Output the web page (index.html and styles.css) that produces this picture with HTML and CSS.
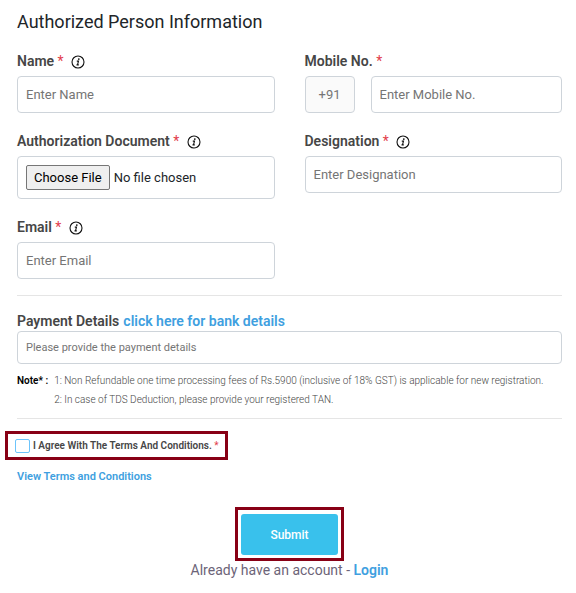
FILE: index.html
```
<!DOCTYPE html>
<html lang="en">
<head>
    <meta charset="UTF-8">
    <meta name="viewport" content="width=device-width, initial-scale=1.0">
    <title>Registration</title>
    <link rel="stylesheet" href="styles.css">
</head>
<body>
    <svg class="sprite" aria-hidden="true">
        <symbol id="info" viewBox="0 0 14 14">
            <circle cx="7" cy="7" r="6" fill="none" stroke="#111" stroke-width="1.1"/>
            <circle cx="7.8" cy="4.1" r="0.9" fill="#111"/>
            <path d="M5.8 6.1H7.5L6.5 9.9M5.5 9.9H7.8" fill="none" stroke="#111" stroke-width="1.1"/>
        </symbol>
    </svg>

    <form class="container">
        <h1>Authorized Person Information</h1>

        <div class="form-grid">
            <div class="form-group">
                <label for="name">Name <span class="required">*</span> <svg class="info-icon"><use href="#info"/></svg></label>
                <input type="text" class="form-control" id="name" placeholder="Enter Name">
            </div>
            <div class="form-group">
                <label for="mobile">Mobile No. <span class="required">*</span></label>
                <div class="mobile-row">
                    <span class="country-code">+91</span>
                    <input type="tel" class="form-control" id="mobile" placeholder="Enter Mobile No.">
                </div>
            </div>
            <div class="form-group">
                <label for="document">Authorization Document <span class="required">*</span> <svg class="info-icon"><use href="#info"/></svg></label>
                <input type="file" class="form-control file-control" id="document">
            </div>
            <div class="form-group">
                <label for="designation">Designation <span class="required">*</span> <svg class="info-icon"><use href="#info"/></svg></label>
                <input type="text" class="form-control" id="designation" placeholder="Enter Designation">
            </div>
            <div class="form-group">
                <label for="email">Email <span class="required">*</span> <svg class="info-icon"><use href="#info"/></svg></label>
                <input type="email" class="form-control" id="email" placeholder="Enter Email">
            </div>
        </div>

        <hr>

        <div class="payment">
            <div class="payment-label">
                <label for="payment">Payment Details</label>
                <a href="#">click here for bank details</a>
            </div>
            <input type="text" class="form-control payment-control" id="payment" placeholder="Please provide the payment details">
            <div class="note">
                <strong>Note* :</strong>
                <div>
                    <p>1: Non Refundable one time processing fees of Rs.5900 (inclusive of 18% GST) is applicable for new registration.</p>
                    <p>2: In case of TDS Deduction, please provide your registered TAN.</p>
                </div>
            </div>
        </div>

        <hr>

        <div class="terms highlight">
            <input type="checkbox" id="agree">
            <label for="agree">I Agree With The Terms And Conditions. <span class="required">*</span></label>
        </div>
        <a class="terms-link" href="#">View Terms and Conditions</a>

        <div class="actions">
            <div class="highlight">
                <button type="submit">Submit</button>
            </div>
            <p>Already have an account - <a href="#">Login</a></p>
        </div>
    </form>
</body>
</html>
```
FILE: styles.css
```
* {
    margin: 0;
    padding: 0;
    box-sizing: border-box;
}

body {
    font-family: Roboto, 'Liberation Sans', sans-serif;
    font-size: 14px;
    line-height: 20px;
    color: #464646;
    background: #fff;
}

.sprite {
    display: none;
}

.container {
    padding: 10px 14px 12px 17px;
}

h1 {
    margin-bottom: 17px;
    color: #212529;
    font-size: 18px;
    font-weight: 400;
    line-height: 24px;
}

label {
    display: block;
    font-weight: 600;
}

a {
    color: #409fe0;
    font-weight: 600;
    text-decoration: none;
}

.required {
    color: #e23d4b;
    font-weight: 400;
}

.info-icon {
    width: 14px;
    height: 14px;
    margin-left: 4px;
    vertical-align: -3px;
}

.form-grid {
    display: grid;
    grid-template-columns: 1fr 1fr;
    gap: 18px 30px;
}

.form-group label {
    height: 20px;
    margin-bottom: 5px;
}

.form-control {
    display: block;
    width: 100%;
    height: 37px;
    padding: 0 8px;
    border: 1px solid #ced4da;
    border-radius: 4px;
    background: #fff;
    color: #212529;
    font-family: inherit;
    font-size: 13px;
}

.form-control::placeholder {
    color: #757575;
}

.mobile-row {
    display: flex;
    gap: 16px;
}

.country-code {
    flex: 0 0 50px;
    border: 1px solid #ced4da;
    border-radius: 4px;
    background: #fafafa;
    color: #757575;
    font-size: 13px;
    line-height: 35px;
    text-align: center;
}

.file-control {
    height: 43px;
    padding: 8px;
}

.file-control::file-selector-button {
    height: 25px;
    margin-right: 4px;
    padding: 0 7px;
    border: 1px solid #767676;
    border-radius: 2px;
    background: #efefef;
    color: #000;
    font-family: inherit;
    font-size: 13px;
}

hr {
    margin: 16px 0 15px;
    border: none;
    border-top: 1px solid #e5e5e5;
}

.payment-label {
    display: flex;
    gap: 4px;
}

.payment-control {
    height: 33px;
    font-size: 11px;
}

.note {
    display: flex;
    gap: 6px;
    margin: 7px 0 -7px;
    font-size: 10px;
    line-height: 19px;
}

.note strong {
    color: #000;
    font-weight: 600;
}

.note p {
    font-weight: 300;
}

.highlight {
    width: fit-content;
    border: 3px solid #880015;
}

.terms {
    display: flex;
    align-items: center;
    gap: 3px;
    height: 29px;
    margin: -3px 0 5px -12px;
    padding: 0 6px 0 7px;
}

.terms label {
    font-size: 10px;
}

.terms input {
    appearance: none;
    width: 15px;
    height: 14px;
    border: 1px solid #6cc4fb;
    border-radius: 2px;
}

.terms input:checked {
    background: #39c1ec;
}

.terms-link {
    font-size: 11px;
}

.actions {
    display: flex;
    flex-direction: column;
    align-items: center;
    margin-top: 20px;
    color: #6c6478;
}

.actions .highlight {
    padding: 4px 3px 3px;
}

.actions p {
    line-height: 18px;
}

button {
    display: block;
    height: 41px;
    padding: 0 29px;
    border: none;
    border-radius: 3px;
    background: #39c1ec;
    color: #fff;
    font-family: inherit;
    font-size: 12px;
    font-weight: 500;
    cursor: pointer;
}

button:hover {
    background: #25b0dc;
}
```
